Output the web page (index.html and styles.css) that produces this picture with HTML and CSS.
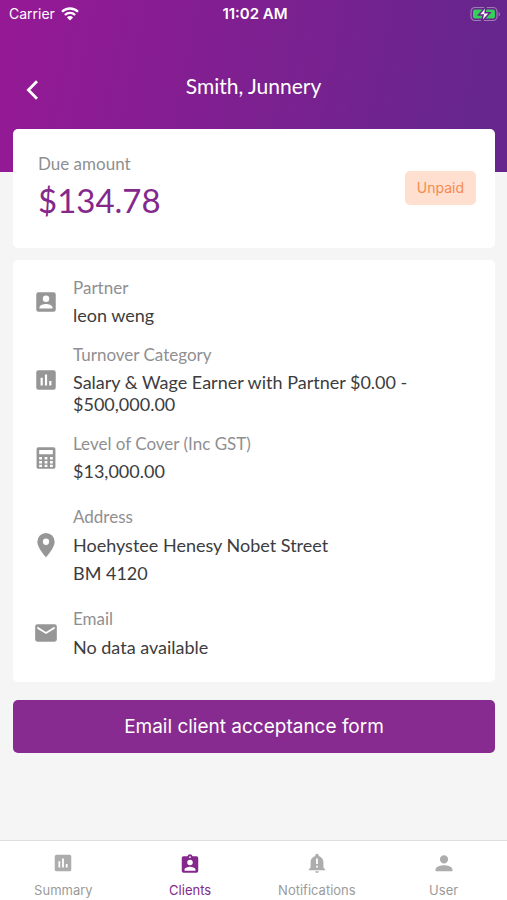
FILE: index.html
```
<!DOCTYPE html>
<html lang="en">
<head>
<meta charset="utf-8">
<meta name="viewport" content="width=device-width, initial-scale=1">
<title>Client details</title>
<link rel="stylesheet" href="styles.css">
</head>
<body>
<header class="hero">
  <div class="status">
    <div class="carrier">
      <span>Carrier</span>
      <svg width="18" height="14" viewBox="0 0 18 14" fill="none" stroke="#fff" stroke-width="2.3" aria-hidden="true"><path d="M1 4.8a11.4 11.4 0 0 1 16 0"/><path d="M3.9 8a7.3 7.3 0 0 1 10.2 0"/><path d="M9 13.6 5.9 10.4a4.4 4.4 0 0 1 6.2 0z" fill="#fff" stroke="none"/></svg>
    </div>
    <span class="time">11:02 AM</span>
    <div class="battery">
      <svg width="31" height="16" viewBox="0 0 31 16" aria-hidden="true"><rect x="1" y="1.500" width="26" height="13" rx="4" fill="none" stroke="#a279b6" stroke-width="1.200"/><path d="M28.600 6v4.400c1.900-.8 1.900-3.600 0-4.400z" fill="#a279b6"/><rect x="3" y="3.500" width="22" height="9" rx="2" fill="#35cf5b"/><path d="M16.400 0 8.600 9h4.600l-1.800 7L20 6.800h-5z" fill="#fff" stroke="#68278d" stroke-width="1.500"/></svg>
    </div>
  </div>
  <div class="nav">
    <button class="back" type="button" aria-label="Back">
      <svg width="14" height="22" viewBox="0 0 14 22" fill="none" stroke="#fff" stroke-width="2.8" aria-hidden="true"><path d="M12 2.2 3.4 11l8.6 8.8"/></svg>
    </button>
    <h1>Smith, Junnery</h1>
  </div>
</header>

<main>
  <section class="card due">
    <div>
      <p class="label">Due amount</p>
      <p class="amount">$134.78</p>
    </div>
    <span class="badge">Unpaid</span>
  </section>

  <section class="card details">
    <div class="row">
      <svg class="icon" viewBox="0 0 24 24" aria-hidden="true"><path d="M3 5v14a2 2 0 0 0 2 2h14a2 2 0 0 0 2-2V5a2 2 0 0 0-2-2H5a2 2 0 0 0-2 2zm12 4a3 3 0 1 1-6 0 3 3 0 0 1 6 0zm-9 8c0-2 4-3.100 6-3.100s6 1.100 6 3.100v1H6v-1z"/></svg>
      <div class="text"><p class="label">Partner</p><p>leon weng</p></div>
    </div>
    <div class="row">
      <svg class="icon" viewBox="0 0 24 24" aria-hidden="true"><path d="M19 3H5a2 2 0 0 0-2 2v14a2 2 0 0 0 2 2h14a2 2 0 0 0 2-2V5a2 2 0 0 0-2-2zM9 17H7v-7h2v7zm4 0h-2V7h2v10zm4 0h-2v-4h2v4z"/></svg>
      <div class="text"><p class="label">Turnover Category</p><p>Salary &amp; Wage Earner with Partner $0.00 - $500,000.00</p></div>
    </div>
    <div class="row">
      <svg class="icon" viewBox="0 0 24 24" aria-hidden="true"><path fill-rule="evenodd" d="M5 2h14a1.700 1.700 0 0 1 1.700 1.700v16.600A1.700 1.700 0 0 1 19 22H5a1.700 1.700 0 0 1-1.700-1.700V3.700A1.700 1.700 0 0 1 5 2zm.7 2.500v4h12.600v-4zm0 6.500v2.300h2.600V11zm5 0v2.300h2.600V11zm5 0v2.300h2.600V11zm-10 3.700V17h2.600v-2.300zm5 0V17h2.600v-2.300zm5 0V17h2.600v-2.300zm-10 3.600v2h2.600v-2zm5 0v2h2.600v-2zm5 0v2h2.600v-2z"/></svg>
      <div class="text"><p class="label">Level of Cover (Inc GST)</p><p>$13,000.00</p></div>
    </div>
    <div class="row wide">
      <svg class="icon" viewBox="0 0 24 24" aria-hidden="true"><path d="M12 1a8 8 0 0 0-8 8c0 5.900 8 14.200 8 14.200S20 14.900 20 9a8 8 0 0 0-8-8zm0 10.900a2.900 2.900 0 1 1 0-5.800 2.900 2.900 0 0 1 0 5.800z"/></svg>
      <div class="text"><p class="label">Address</p><p>Hoehystee Henesy Nobet Street</p><p>BM 4120</p></div>
    </div>
    <div class="row wide">
      <svg class="icon" viewBox="0 0 24 24" aria-hidden="true"><path d="M20 4H4a2 2 0 0 0-2 2v12a2 2 0 0 0 2 2h16a2 2 0 0 0 2-2V6a2 2 0 0 0-2-2zm0 4-8 5-8-5V6l8 5 8-5v2z"/></svg>
      <div class="text"><p class="label">Email</p><p>No data available</p></div>
    </div>
  </section>

  <button class="submit" type="button">Email client acceptance form</button>
</main>

<nav class="tabs" aria-label="Main">
  <a href="#summary"><svg viewBox="0 0 24 24" aria-hidden="true"><path d="M19 3H5a2 2 0 0 0-2 2v14a2 2 0 0 0 2 2h14a2 2 0 0 0 2-2V5a2 2 0 0 0-2-2zM9 17H7v-7h2v7zm4 0h-2V7h2v10zm4 0h-2v-4h2v4z"/></svg>Summary</a>
  <a class="active" href="#clients" aria-current="page"><svg viewBox="0 0 24 24" aria-hidden="true"><path d="M19 4.500h-4.180a3 3 0 0 0-5.640 0H5a2 2 0 0 0-2 2v14a2 2 0 0 0 2 2h14a2 2 0 0 0 2-2v-14a2 2 0 0 0-2-2zm-7 0a1 1 0 1 1 0 2 1 1 0 0 1 0-2zm0 4a3 3 0 1 1 0 6 3 3 0 0 1 0-6zm6 12H6v-1.400c0-2 4-3.100 6-3.100s6 1.100 6 3.100v1.400z"/></svg>Clients</a>
  <a href="#notifications"><svg viewBox="0 0 24 24" aria-hidden="true"><path d="M10 21h4a2 2 0 0 1-4 0zm11-2v1H3v-1l2-2v-6c0-3.100 2.030-5.830 5-6.710V4a2 2 0 1 1 4 0v.290c2.970.880 5 3.610 5 6.710v6zM13 13V7h-2v6zm0 4v-2h-2v2z"/></svg>Notifications</a>
  <a href="#user"><svg viewBox="0 0 24 24" aria-hidden="true"><path d="M12 12.500a4.500 4.500 0 1 0 0-9 4.500 4.500 0 0 0 0 9zm0 2c-3 0-9.200 1.500-9.200 4.500V21h18.400v-2c0-3-6.200-4.500-9.200-4.500z"/></svg>User</a>
</nav>
</body>
</html>
```
FILE: styles.css
```
* {
  box-sizing: border-box;
}

body {
  margin: 0;
  min-height: 100vh;
  display: flex;
  flex-direction: column;
  background: #f5f5f5;
  color: #3c3c3e;
  font: 18px/22px Lato, "Open Sans", sans-serif;
}

h1,
p {
  margin: 0;
}

button {
  border: 0;
  cursor: pointer;
}

.hero {
  padding-bottom: 60px;
  background: linear-gradient(102deg, #961995 0%, #7d2090 50%, #66268d 92%);
  color: #fff;
}

.status {
  display: grid;
  grid-template-columns: 1fr auto 1fr;
  align-items: center;
  height: 28px;
  padding: 0 6px 0 9px;
  font: 14px/20px Inter, sans-serif;
}

.carrier {
  display: flex;
  align-items: center;
  gap: 6px;
}

.time {
  font-size: 15px;
  font-weight: 600;
}

.battery {
  display: flex;
  justify-content: flex-end;
}

.nav {
  display: grid;
  grid-template-columns: 40px 1fr 40px;
  align-items: start;
  padding: 44px 12px 10px;
}

.back {
  display: flex;
  justify-content: center;
  padding: 7px 0 1px;
  background: none;
}

h1 {
  font-size: 21px;
  font-weight: 400;
  line-height: 28px;
  text-align: center;
}

main {
  flex: 1;
  display: flex;
  flex-direction: column;
  gap: 12px;
  margin-top: -43px;
  padding: 0 12px 20px 13px;
}

.card {
  border-radius: 5px;
  background: #fff;
}

.due {
  display: flex;
  justify-content: space-between;
  align-items: center;
  padding: 24px 19px 26px 25px;
}

.label {
  color: #8f8f91;
  font-size: 17px;
}

.amount {
  margin-top: 3px;
  color: #84288c;
  font-size: 33px;
  line-height: 44px;
}

.badge {
  padding: 6px 12px;
  border-radius: 5px;
  background: #ffe0d0;
  color: #f58a50;
  font: 14px/22px Inter, sans-serif;
}

.details {
  display: flex;
  flex-direction: column;
  gap: 18px;
  padding: 17px 20px 24px;
}

.row {
  display: flex;
  align-items: center;
  gap: 14px;
}

.wide {
  margin-top: 6px;
}

.icon {
  flex: none;
  width: 26px;
  height: 26px;
  fill: #969696;
}

.text {
  display: grid;
  gap: 5px;
}

.wide .text {
  gap: 6px;
}

.submit {
  margin-top: 6px;
  padding: 14px;
  border-radius: 5px;
  background: #882b90;
  color: #fff;
  font: 19px/25px Inter, sans-serif;
}

.tabs {
  display: grid;
  grid-template-columns: repeat(4, 1fr);
  border-top: 1px solid #dedede;
  background: #fff;
}

.tabs a {
  display: flex;
  flex-direction: column;
  align-items: center;
  gap: 6px;
  padding-top: 11px;
  color: #9b9b9b;
  font: 13px/20px Inter, sans-serif;
  text-decoration: none;
}

.tabs svg {
  width: 22px;
  height: 22px;
  fill: #adadad;
}

.tabs .active {
  color: #84288c;
}

.tabs .active svg {
  fill: #84288c;
}
```
